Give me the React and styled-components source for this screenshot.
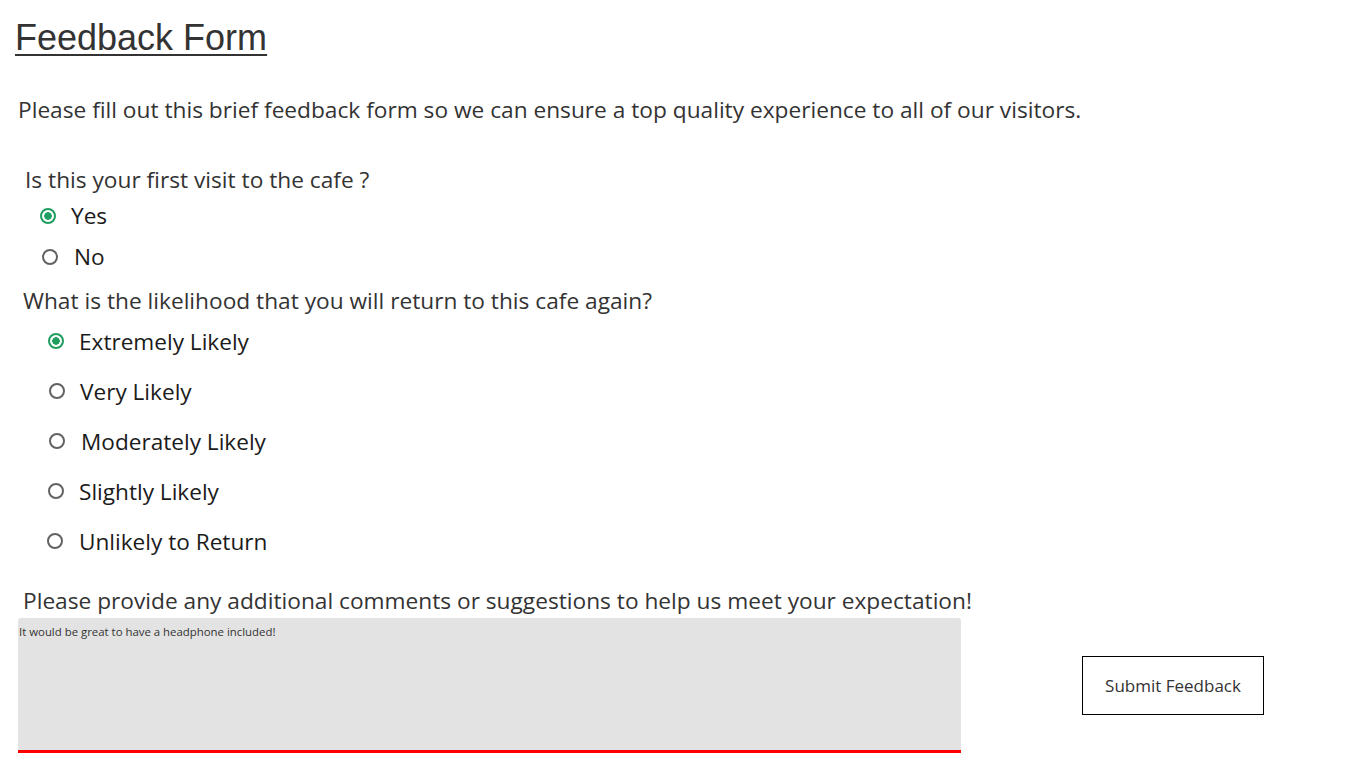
import React from 'react'
import styled, { createGlobalStyle } from 'styled-components'

const GlobalStyle = createGlobalStyle`
  html, body {
    margin: 0;
    padding: 0;
    background: #ffffff;
  }
  body {
    font-family: "Open Sans", "Noto Sans", sans-serif;
    color: #333333;
  }
`

const Page = styled.div`
  width: 1366px;
  height: 768px;
  overflow: hidden;
  display: flex;
  flex-direction: column;
`

const Header = styled.header`
  height: 90px;
  padding-left: 15px;
  box-sizing: border-box;
`

const Title = styled.h1`
  margin: 0;
  padding-top: 17px;
  font-family: "Liberation Sans", Arial, sans-serif;
  font-weight: 400;
  font-size: 36px;
  line-height: 1.15;
  color: #333333;
  text-decoration: underline;
  text-decoration-thickness: 2px;
  text-underline-offset: 4px;
  display: inline-block;
`

const Intro = styled.p`
  margin: 0;
  height: 40px;
  line-height: 40px;
  padding-left: 18px;
  font-size: 22.7px;
  color: #333333;
`

const Form = styled.form`
  display: flex;
  flex-direction: column;
`

const Question = styled.div`
  height: 34px;
  line-height: 34px;
  font-size: 22.7px;
  color: #333333;
  margin-top: ${p => p.$top || 0}px;
  padding-left: ${p => p.$left || 23}px;
`

const Options = styled.div`
  display: flex;
  flex-direction: column;
  margin-top: -2px;
`

const Option = styled.label`
  display: flex;
  align-items: center;
  height: ${p => p.$height}px;
  padding-left: ${p => p.$indent}px;
  font-size: 22.6px;
  color: #1b1b1b;
  cursor: pointer;
`

const Radio = styled.input.attrs({ type: 'radio' })`
  appearance: none;
  margin: 0 ${p => p.$gap || 15}px 0 0;
  width: 16px;
  height: 16px;
  border: 2px solid #626262;
  border-radius: 50%;
  box-sizing: border-box;
  background: #fff;
  flex-shrink: 0;

  &:checked {
    border-color: #1f9e5f;
    background: radial-gradient(circle, #1f9e5f 0 3.5px, #fff 4px);
  }
`

const CommentRow = styled.div`
  display: flex;
  align-items: center;
  padding-left: 18px;
`

const Comment = styled.textarea`
  width: 943px;
  height: 135px;
  box-sizing: border-box;
  border: none;
  border-bottom: 3px solid #ff0000;
  border-radius: 3px 3px 0 0;
  background: #e3e3e3;
  padding: 6px 1px;
  resize: none;
  font-family: "Open Sans", "Noto Sans", sans-serif;
  font-size: 11.4px;
  line-height: 16px;
  color: #333333;
  outline: none;
`

const SubmitButton = styled.button`
  margin-left: 121px;
  width: 182px;
  height: 59px;
  border: 1px solid #000000;
  background: #ffffff;
  font-family: "Open Sans", "Noto Sans", sans-serif;
  font-size: 17px;
  color: #333333;
  cursor: pointer;
`

const visitOptions = [
  { label: 'Yes', indent: 40, gap: 15, checked: true },
  { label: 'No', indent: 42, gap: 16 },
]

const returnOptions = [
  { label: 'Extremely Likely', indent: 48, gap: 15, checked: true },
  { label: 'Very Likely', indent: 49, gap: 15 },
  { label: 'Moderately Likely', indent: 49, gap: 16 },
  { label: 'Slightly Likely', indent: 48, gap: 15 },
  { label: 'Unlikely to Return', indent: 47, gap: 16 },
]

function App() {
  return (
    <Page>
      <GlobalStyle />
      <Header>
        <Title>Feedback Form</Title>
      </Header>
      <Intro>
        Please fill out this brief feedback form so we can ensure a top quality experience to all of our visitors.
      </Intro>
      <Form onSubmit={e => e.preventDefault()}>
        <Question $top={33} $left={25}>Is this your first visit to the cafe ?</Question>
        <Options>
          {visitOptions.map(o => (
            <Option key={o.label} $height={41} $indent={o.indent}>
              <Radio name="visit" $gap={o.gap} defaultChecked={o.checked} />
              {o.label}
            </Option>
          ))}
        </Options>
        <Question $top={7}>What is the likelihood that you will return to this cafe again?</Question>
        <Options>
          {returnOptions.map(o => (
            <Option key={o.label} $height={50} $indent={o.indent}>
              <Radio name="return" $gap={o.gap} defaultChecked={o.checked} />
              {o.label}
            </Option>
          ))}
        </Options>
        <Question $top={18}>Please provide any additional comments or suggestions to help us meet your expectation!</Question>
        <CommentRow>
          <Comment defaultValue="It would be great to have a headphone included!" />
          <SubmitButton type="submit">Submit Feedback</SubmitButton>
        </CommentRow>
      </Form>
    </Page>
  )
}

export default App
